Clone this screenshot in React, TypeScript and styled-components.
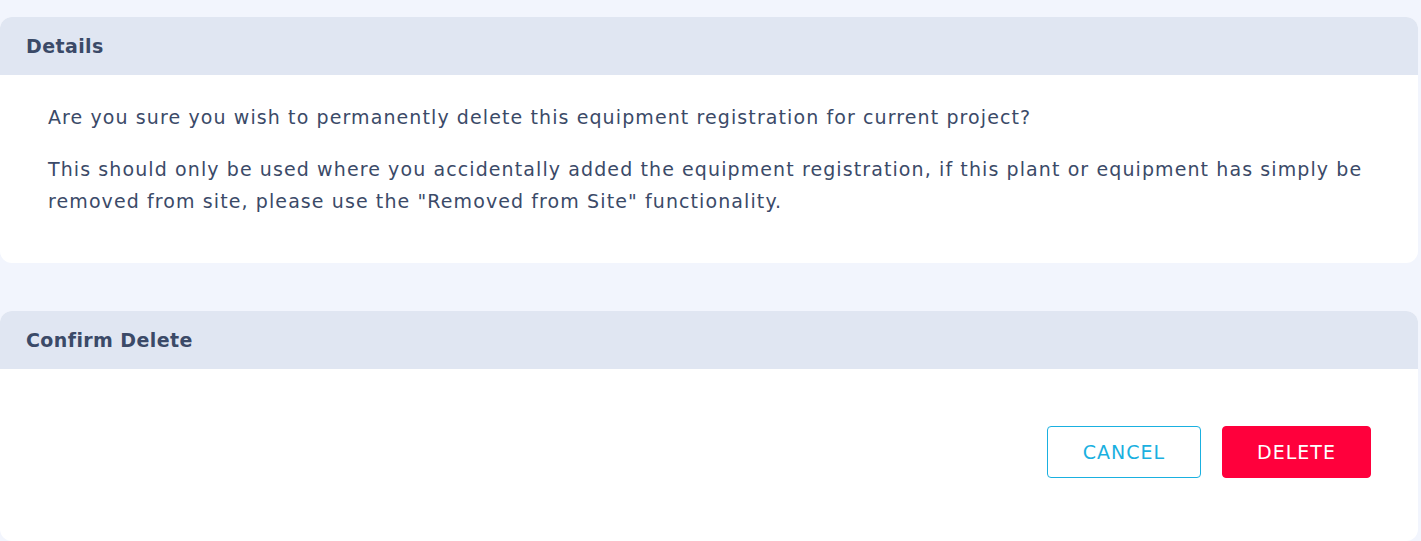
import React from "react";
import styled, { createGlobalStyle } from "styled-components";

const GlobalStyle = createGlobalStyle`
  html, body {
    margin: 0;
    padding: 0;
    background: #f2f5fd;
    font-family: "DejaVu Sans", "Open Sans", sans-serif;
  }
`;

const Page = styled.div`
  padding: 17px 3px 0 0;
  display: flex;
  flex-direction: column;
  gap: 48px;
`;

const Card = styled.section`
  background: #ffffff;
  border-radius: 12px;
  overflow: hidden;
`;

const CardHeader = styled.div`
  height: 58px;
  display: flex;
  align-items: center;
  padding: 0 26px;
  background: #e0e6f2;
  color: #3b4a68;
  font-size: 19px;
  font-weight: 700;
  letter-spacing: 0.4px;
`;

const DetailsBody = styled.div`
  padding: 26px 48px 46px;
  color: #3b4a68;
  font-size: 19px;
  letter-spacing: 1.1px;
  line-height: 32px;
`;

const Paragraph = styled.p`
  margin: 0;
  & + & {
    margin-top: 20px;
  }
`;

const ActionsBody = styled.div`
  display: flex;
  justify-content: flex-end;
  gap: 21px;
  padding: 57px 47px 63px;
`;

const Button = styled.button<{ $variant: "outline" | "danger" }>`
  height: 52px;
  width: ${(p) => (p.$variant === "outline" ? "154px" : "149px")};
  border-radius: 4px;
  font-family: inherit;
  font-size: 19px;
  letter-spacing: 1px;
  text-transform: uppercase;
  cursor: pointer;
  border: 1px solid ${(p) => (p.$variant === "outline" ? "#1ab0e0" : "#ff003c")};
  background: ${(p) => (p.$variant === "outline" ? "#ffffff" : "#ff003c")};
  color: ${(p) => (p.$variant === "outline" ? "#1ab0e0" : "#ffffff")};
`;

const App = () => {
  return (
    <>
      <GlobalStyle />
      <Page>
        <Card>
          <CardHeader>Details</CardHeader>
          <DetailsBody>
            <Paragraph>
              Are you sure you wish to permanently delete this equipment
              registration for current project?
            </Paragraph>
            <Paragraph>
              This should only be used where you accidentally added the
              equipment registration, if this plant or equipment has simply be
              removed from site, please use the "Removed from Site"
              functionality.
            </Paragraph>
          </DetailsBody>
        </Card>
        <Card>
          <CardHeader>Confirm Delete</CardHeader>
          <ActionsBody>
            <Button $variant="outline">Cancel</Button>
            <Button $variant="danger">Delete</Button>
          </ActionsBody>
        </Card>
      </Page>
    </>
  );
};

export default App;
